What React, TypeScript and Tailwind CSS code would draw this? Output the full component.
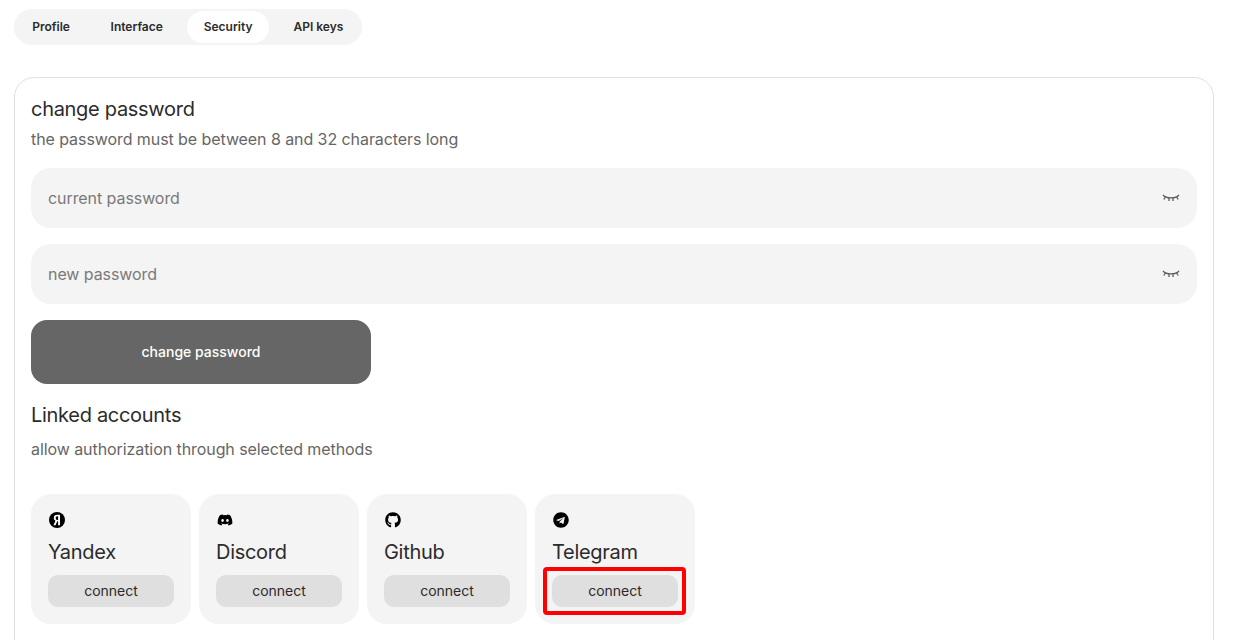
import React from 'react';
import { FaDiscord, FaGithub, FaTelegram } from 'react-icons/fa';

const tabs = ['Profile', 'Interface', 'Security', 'API keys'];

const ClosedEye = () => (
  <svg width="18" height="18" viewBox="0 0 18 18" fill="none" stroke="#5a5a5a" strokeWidth="1.3">
    <path d="M1 6C4 9.8 14 9.8 17 6" />
    <path d="M3.4 8L1.8 10.5M7 9.3V12M11 9.3V12M14.6 8L16.2 10.5" />
  </svg>
);

const YandexIcon = () => (
  <svg width="16" height="16" viewBox="0 0 16 16">
    <circle cx="8" cy="8" r="8" fill="#000" />
    <path d="M11 13.2V2.8H8.3C6.1 2.8 4.8 4 4.8 6 4.8 7.4 5.5 8.3 6.5 8.8L4.5 13.2H6.5L8.3 9.2H9.1V13.2ZM9.1 7.9H8.4C7.2 7.9 6.7 7.2 6.7 6 6.7 4.9 7.3 4.2 8.4 4.2H9.1Z" fill="#fff" />
  </svg>
);

const PasswordField = ({ label }: { label: string }) => (
  <div className="flex h-[60px] items-center justify-between rounded-[20px] bg-[#f4f4f4] pl-[17px] pr-[17px]">
    <span className="text-base tracking-[-0.07px] text-[#7a7a7a]">{label}</span>
    <ClosedEye />
  </div>
);

const accounts = [
  { name: 'Yandex', icon: <YandexIcon /> },
  { name: 'Discord', icon: <FaDiscord size={16} color="#000" /> },
  { name: 'Github', icon: <FaGithub size={16} color="#000" /> },
  { name: 'Telegram', icon: <FaTelegram size={16} color="#000" /> },
];

export default function App() {
  return (
    <div className="h-screen overflow-hidden bg-white px-[14px] pt-[9px] font-['Inter',sans-serif] text-[#2b2b2b]">
      <div className="inline-flex h-9 items-center gap-2 rounded-full bg-[#f4f4f4] p-0.5">
        {tabs.map((tab, i) => (
          <div
            key={tab}
            className={
              (tab === 'Security' ? 'bg-white ' : '') +
              (i < 2
                ? 'flex h-8 items-center rounded-full px-[16.3px] text-xs font-semibold'
                : 'flex h-8 items-center rounded-full px-[16.5px] text-xs font-semibold')
            }
          >
            {tab}
          </div>
        ))}
      </div>

      <div className="mt-8 h-[700px] w-[1200px] rounded-[20px] border border-[#e0e0e0] px-4 pt-4">
        <h2 className="text-xl leading-[30px] tracking-[-0.3px]">change password</h2>
        <p className="mt-[3px] text-base leading-6 tracking-[-0.075px] text-[#666]">the password must be between 8 and 32 characters long</p>

        <div className="mt-[17px] flex flex-col gap-4">
          <PasswordField label="current password" />
          <PasswordField label="new password" />
        </div>

        <button className="mt-4 h-16 w-[340px] rounded-2xl bg-[#666] text-sm font-medium text-white">change password</button>

        <h2 className="mt-4 text-xl leading-[30px] tracking-[-0.3px]">Linked accounts</h2>
        <p className="mt-[7px] text-base leading-6 tracking-[-0.075px] text-[#666]">allow authorization through selected methods</p>

        <div className="mt-[33px] flex gap-2">
          {accounts.map((account) => (
            <div key={account.name} className="relative h-[130px] w-40 rounded-[20px] bg-[#f4f4f4] px-[17px] pt-[18px]">
              <div className="ml-px">{account.icon}</div>
              <div className="mt-[9px] text-xl leading-[30px] tracking-[-0.3px]">{account.name}</div>
              <button className="mt-2 h-8 w-[126px] rounded-[10px] bg-[#dfdfdf] text-sm">connect</button>
              {account.name === 'Telegram' && (
                <div className="absolute left-2 top-[73px] h-[48px] w-[143px] rounded-[4px] border-4 border-[#ff0000]" />
              )}
            </div>
          ))}
        </div>
      </div>
    </div>
  );
}
